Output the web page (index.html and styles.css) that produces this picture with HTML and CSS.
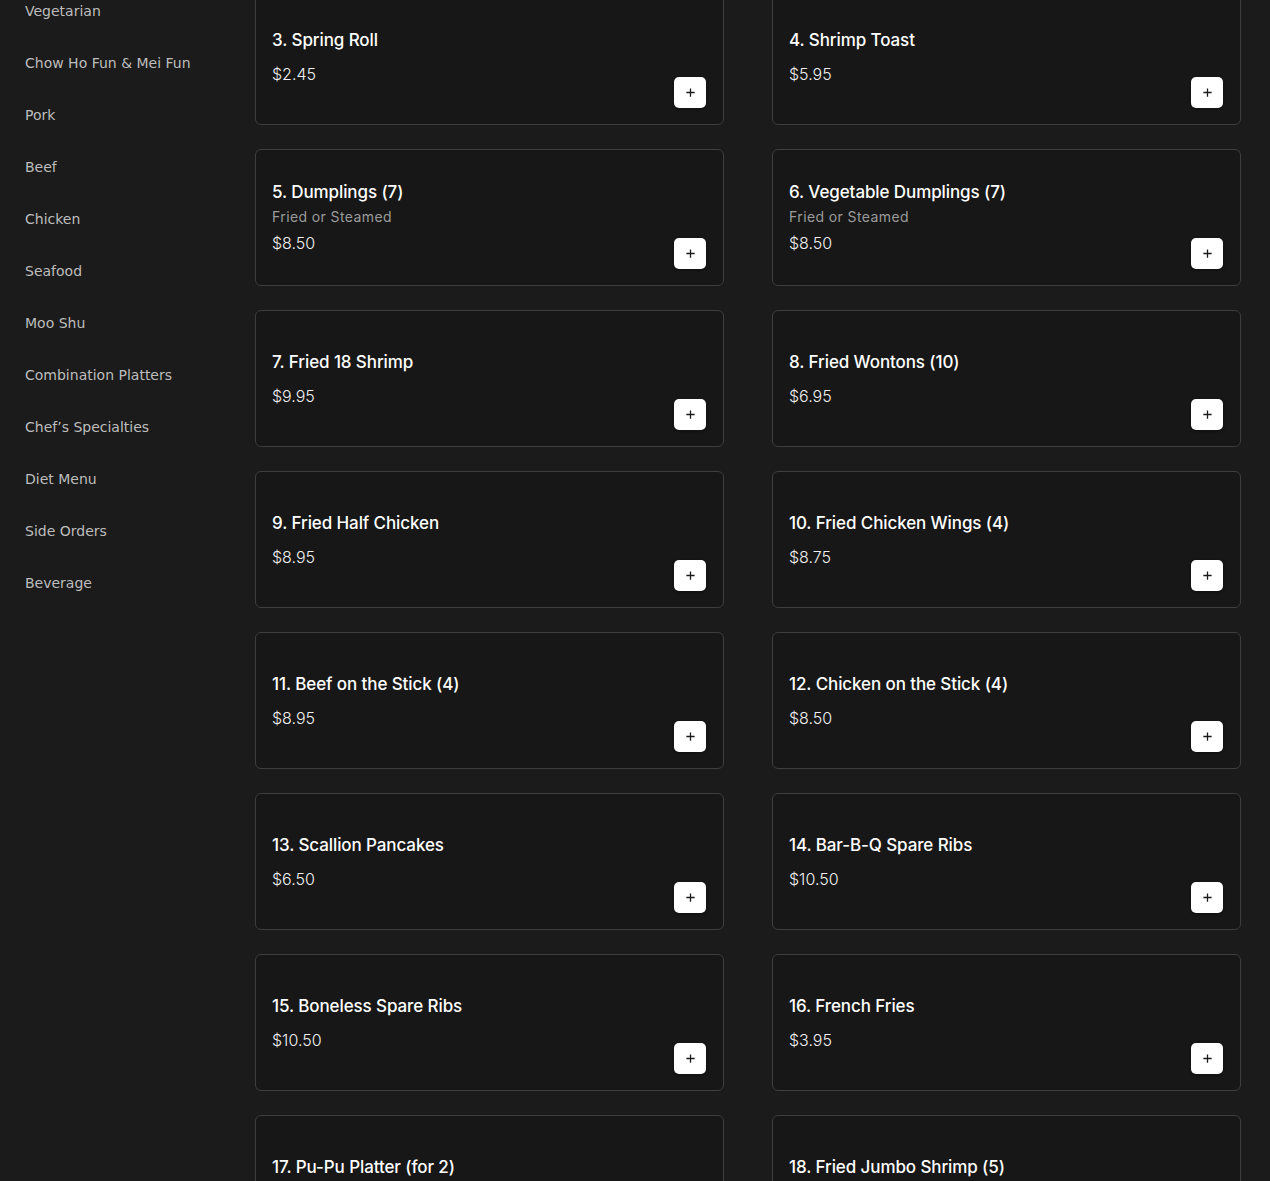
FILE: index.html
```html
<!DOCTYPE html>
<html lang="en">
<head>
<meta charset="utf-8">
<title>Menu</title>
<link rel="stylesheet" href="styles.css">
</head>
<body>
<div class="layout">
  <nav class="sidebar">
    <ul class="cats">
      <li>Vegetarian</li>
      <li>Chow Ho Fun &amp; Mei Fun</li>
      <li>Pork</li>
      <li>Beef</li>
      <li>Chicken</li>
      <li>Seafood</li>
      <li>Moo Shu</li>
      <li>Combination Platters</li>
      <li>Chef’s Specialties</li>
      <li>Diet Menu</li>
      <li>Side Orders</li>
      <li>Beverage</li>
    </ul>
  </nav>
  <main class="main">
    <div class="grid">
      <div class="card"><div class="info"><div class="title">3. Spring Roll</div><div class="price">$2.45</div></div><button class="add"><svg viewBox="0 0 12 12"><path d="M6 1.5v9M1.5 6h9"/></svg></button></div>
      <div class="card"><div class="info"><div class="title">4. Shrimp Toast</div><div class="price">$5.95</div></div><button class="add"><svg viewBox="0 0 12 12"><path d="M6 1.5v9M1.5 6h9"/></svg></button></div>
      <div class="card"><div class="info"><div class="title">5. Dumplings (7)</div><div class="sub">Fried or Steamed</div><div class="price">$8.50</div></div><button class="add"><svg viewBox="0 0 12 12"><path d="M6 1.5v9M1.5 6h9"/></svg></button></div>
      <div class="card"><div class="info"><div class="title">6. Vegetable Dumplings (7)</div><div class="sub">Fried or Steamed</div><div class="price">$8.50</div></div><button class="add"><svg viewBox="0 0 12 12"><path d="M6 1.5v9M1.5 6h9"/></svg></button></div>
      <div class="card"><div class="info"><div class="title">7. Fried 18 Shrimp</div><div class="price">$9.95</div></div><button class="add"><svg viewBox="0 0 12 12"><path d="M6 1.5v9M1.5 6h9"/></svg></button></div>
      <div class="card"><div class="info"><div class="title">8. Fried Wontons (10)</div><div class="price">$6.95</div></div><button class="add"><svg viewBox="0 0 12 12"><path d="M6 1.5v9M1.5 6h9"/></svg></button></div>
      <div class="card"><div class="info"><div class="title">9. Fried Half Chicken</div><div class="price">$8.95</div></div><button class="add"><svg viewBox="0 0 12 12"><path d="M6 1.5v9M1.5 6h9"/></svg></button></div>
      <div class="card"><div class="info"><div class="title">10. Fried Chicken Wings (4)</div><div class="price">$8.75</div></div><button class="add"><svg viewBox="0 0 12 12"><path d="M6 1.5v9M1.5 6h9"/></svg></button></div>
      <div class="card"><div class="info"><div class="title">11. Beef on the Stick (4)</div><div class="price">$8.95</div></div><button class="add"><svg viewBox="0 0 12 12"><path d="M6 1.5v9M1.5 6h9"/></svg></button></div>
      <div class="card"><div class="info"><div class="title">12. Chicken on the Stick (4)</div><div class="price">$8.50</div></div><button class="add"><svg viewBox="0 0 12 12"><path d="M6 1.5v9M1.5 6h9"/></svg></button></div>
      <div class="card"><div class="info"><div class="title">13. Scallion Pancakes</div><div class="price">$6.50</div></div><button class="add"><svg viewBox="0 0 12 12"><path d="M6 1.5v9M1.5 6h9"/></svg></button></div>
      <div class="card"><div class="info"><div class="title">14. Bar-B-Q Spare Ribs</div><div class="price">$10.50</div></div><button class="add"><svg viewBox="0 0 12 12"><path d="M6 1.5v9M1.5 6h9"/></svg></button></div>
      <div class="card"><div class="info"><div class="title">15. Boneless Spare Ribs</div><div class="price">$10.50</div></div><button class="add"><svg viewBox="0 0 12 12"><path d="M6 1.5v9M1.5 6h9"/></svg></button></div>
      <div class="card"><div class="info"><div class="title">16. French Fries</div><div class="price">$3.95</div></div><button class="add"><svg viewBox="0 0 12 12"><path d="M6 1.5v9M1.5 6h9"/></svg></button></div>
      <div class="card"><div class="info"><div class="title">17. Pu-Pu Platter (for 2)</div><div class="price">$21.95</div></div><button class="add"><svg viewBox="0 0 12 12"><path d="M6 1.5v9M1.5 6h9"/></svg></button></div>
      <div class="card"><div class="info"><div class="title">18. Fried Jumbo Shrimp (5)</div><div class="price">$9.95</div></div><button class="add"><svg viewBox="0 0 12 12"><path d="M6 1.5v9M1.5 6h9"/></svg></button></div>
    </div>
  </main>
</div>
</body>
</html>
```

FILE: styles.css
```css
html, body {
  margin: 0;
  padding: 0;
  background: #1b1b1b;
  height: 100%;
  overflow: hidden;
}
body {
  font-family: "DejaVu Sans", sans-serif;
}
.layout {
  display: flex;
  align-items: flex-start;
}
.sidebar {
  width: 255px;
  flex: none;
  box-sizing: border-box;
  padding-left: 25px;
}
.cats {
  list-style: none;
  margin: -15px 0 0 0;
  padding: 0;
}
.cats li {
  font-size: 14px;
  line-height: 20px;
  padding: 16px 0;
  color: #bdbdbd;
  white-space: nowrap;
}
.main {
  flex: 1;
  padding-right: 29px;
}
.grid {
  margin-top: -12px;
  display: grid;
  grid-template-columns: 469px 469px;
  column-gap: 48px;
  row-gap: 24px;
}
.card {
  box-sizing: border-box;
  height: 137px;
  border: 1px solid #3e3e3e;
  border-radius: 6px;
  background: #171717;
  padding: 16px 17px 16px 16px;
  display: flex;
  justify-content: space-between;
}
.info {
  align-self: center;
  font-family: "Inter", "Noto Sans", sans-serif;
}
.title {
  color: #ffffff;
  font-size: 17px;
  font-weight: 500;
  line-height: 24px;
  letter-spacing: -0.1px;
}
.sub {
  color: #9b9b9b;
  font-size: 14px;
  font-weight: 400;
  line-height: 22px;
  margin-top: 2px;
  letter-spacing: 0.4px;
}
.price {
  color: #f0f0f0;
  font-size: 16px;
  font-weight: 300;
  line-height: 24px;
  margin-top: 10px;
}
.sub + .price {
  margin-top: 3px;
}
.add {
  align-self: flex-end;
  width: 32px;
  height: 31px;
  padding: 0;
  border: none;
  border-radius: 5px;
  background: #ffffff;
  display: flex;
  align-items: center;
  justify-content: center;
  box-shadow: 0 1px 3px rgba(0,0,0,0.4);
}
.add svg {
  width: 11px;
  height: 11px;
  fill: none;
  stroke: #1a1a1a;
  stroke-width: 1.4;
}
```
